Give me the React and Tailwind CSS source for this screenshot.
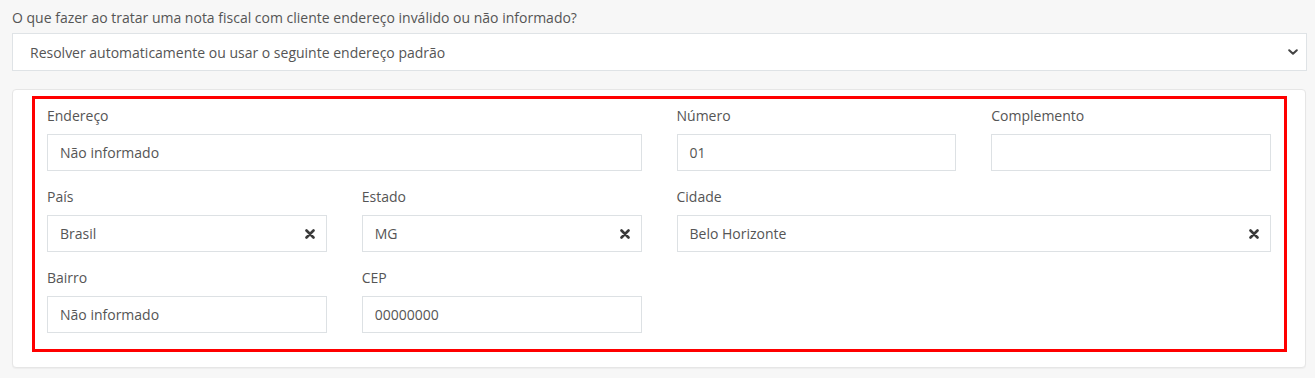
const FONT = { fontFamily: '"Open Sans", "Noto Sans", sans-serif' };

function ClearIcon() {
  return (
    <svg width="10" height="10" viewBox="0 0 10 10" className="shrink-0">
      <path d="M1.5 1.5 L8.5 8.5 M8.5 1.5 L1.5 8.5" stroke="#3a3a3a" strokeWidth="2.6" strokeLinecap="round" />
    </svg>
  );
}

function Field({ label, value, clear, className = "" }) {
  return (
    <div className={`flex flex-col ${className}`}>
      <label className="h-5 leading-5 mb-2 text-[14px] text-[#555]">{label}</label>
      <div className="h-[37px] bg-white border border-[#dde1e4] flex items-center justify-between pl-3 pr-[11px] text-[14px] text-[#555]">
        <span>{value}</span>
        {clear && <ClearIcon />}
      </div>
    </div>
  );
}

export default function App() {
  return (
    <div style={FONT} className="bg-[#f7f7f7] min-h-[378px] pl-3 pr-2 pt-2">
      <div className="h-5 leading-5 mb-[5px] text-[14px] text-[#555]">
        O que fazer ao tratar uma nota fiscal com cliente endereço inválido ou não informado?
      </div>
      <div className="h-[38px] bg-white border border-[#dfe3e6] flex items-center justify-between pl-[17px] pr-[8px] text-[14px] text-[#555]">
        <span>Resolver automaticamente ou usar o seguinte endereço padrão</span>
        <svg width="10" height="6" viewBox="0 0 10 6">
          <path d="M1.2 1.2 L5 4.8 L8.8 1.2" fill="none" stroke="#444" strokeWidth="2" strokeLinecap="round" strokeLinejoin="round" />
        </svg>
      </div>
      <div className="mt-[18px] mr-[1px] bg-white border border-[#e6e6e6] rounded shadow-[0_1px_1px_rgba(0,0,0,0.04)] pt-[6px] pb-[15px] pl-[19px] pr-[18px]">
        <div className="border-[3px] border-[#ff0000] pt-[7px] pb-4 pl-3 pr-[13px]">
          <div className="grid grid-cols-4 gap-x-[35px] gap-y-4">
            <Field className="col-span-2" label="Endereço" value="Não informado" />
            <Field label="Número" value="01" />
            <Field label="Complemento" value="" />
            <Field label="País" value="Brasil" clear />
            <Field label="Estado" value="MG" clear />
            <Field className="col-span-2" label="Cidade" value="Belo Horizonte" clear />
            <Field label="Bairro" value="Não informado" />
            <Field label="CEP" value="00000000" />
          </div>
        </div>
      </div>
    </div>
  );
}
